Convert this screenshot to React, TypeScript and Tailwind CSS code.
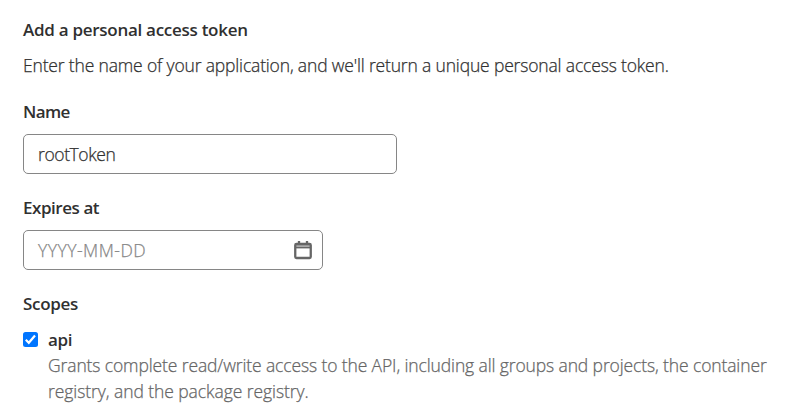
import React from "react";

const font = "font-['Segoe_UI','Open_Sans','Noto_Sans',sans-serif]";
const body = "font-light [-webkit-text-stroke:0.25px_currentColor]";

function Heading({ text, className = "" }: { text: string; className?: string }) {
  return (
    <div className={`h-6 whitespace-nowrap text-[17px] leading-6 font-semibold text-[#303030] ${className}`}>
      {text}
    </div>
  );
}

function CalendarIcon() {
  return (
    <svg width="20" height="20" viewBox="0 0 20 20" fill="none" aria-hidden="true">
      <path d="M2 5h16v3H2z" fill="#666666" fillOpacity="0.55" />
      <rect x="2.25" y="4" width="15.5" height="14" rx="1.2" stroke="#666666" strokeWidth="2.3" />
      <path d="M2 7.7h16" stroke="#666666" strokeWidth="1.4" />
      <path d="M6 1v3M14 1v3" stroke="#666666" strokeWidth="2.3" />
    </svg>
  );
}

export default function App() {
  return (
    <main className={`h-[412px] w-[787px] overflow-hidden bg-white pl-[23px] pt-[18px] text-[17.5px] text-[#303030] ${font}`}>
      <Heading text="Add a personal access token" className="tracking-[-0.28px]" />
      <p className={`mt-[11px] h-6 whitespace-nowrap leading-6 tracking-[-0.163px] ${body}`}>
        Enter the name of your application, and we'll return a unique personal access token.
      </p>
      <Heading text="Name" className="mt-[23px] tracking-[-0.6px]" />
      <div className={`mt-[10px] flex h-10 w-[374px] items-center rounded-[5px] border border-[#868686] pl-[14px] leading-6 tracking-[-0.4px] ${body}`}>
        rootToken
      </div>
      <Heading text="Expires at" className="mt-[22px] tracking-[-0.45px]" />
      <div className="mt-[10px] flex h-10 w-[300px] items-center justify-between rounded-[5px] border border-[#868686] pl-[14px] pr-[9px] leading-6">
        <span className={`tracking-[0.5px] text-[#868686] ${body}`}>YYYY-MM-DD</span>
        <CalendarIcon />
      </div>
      <Heading text="Scopes" className="mt-[22px] tracking-[-0.3px]" />
      <div className="mt-3 flex h-6 items-center gap-[10px]">
        <span className="mb-px flex size-[15px] items-center justify-center rounded-[2.5px] bg-[#0075ff]">
          <svg width="15" height="15" viewBox="0 0 15 15" fill="none" stroke="#fff" strokeWidth="2.2">
            <path d="M2.8 7.7 5.8 10.8 12 3.5" />
          </svg>
        </span>
        <Heading text="api" className="tracking-[-0.4px]" />
      </div>
      <div className={`ml-[25px] whitespace-nowrap leading-[26px] text-[#666666] ${body}`}>
        <p className="tracking-[-0.12px]">Grants complete read/write access to the API, including all groups and projects, the container</p>
        <p className="tracking-[-0.07px]">registry, and the package registry.</p>
      </div>
    </main>
  );
}
